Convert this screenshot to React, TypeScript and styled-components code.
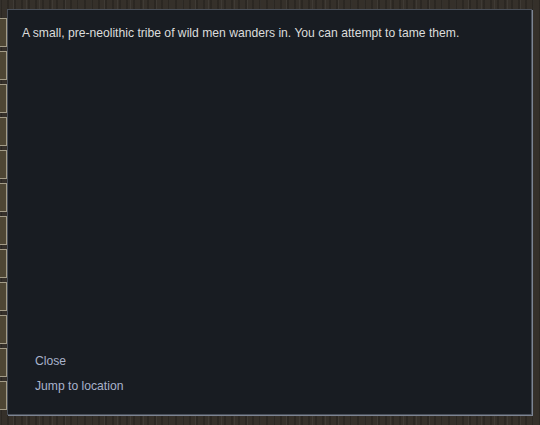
import styled, { createGlobalStyle } from "styled-components";

const GlobalStyle = createGlobalStyle`
  html, body {
    margin: 0;
    padding: 0;
    width: 540px;
    height: 425px;
    overflow: hidden;
  }
  body {
    font-family: "Liberation Sans", Arial, sans-serif;
    background-color: #35302a;
    background-image:
      repeating-linear-gradient(90deg, rgba(0,0,0,0.18) 0px, rgba(0,0,0,0.18) 2px, transparent 2px, transparent 7px),
      repeating-linear-gradient(90deg, rgba(255,255,255,0.05) 0px, rgba(255,255,255,0.05) 1px, transparent 1px, transparent 13px);
  }
`;

const Screen = styled.div`
  width: 540px;
  height: 425px;
  display: flex;
  position: relative;
`;

const TileStrip = styled.div`
  width: 7px;
  display: flex;
  flex-direction: column;
  gap: 4px;
  padding-top: 18px;
`;

const Tile = styled.div`
  height: 27px;
  border: 1px solid #a39c88;
  border-left: none;
  background: #4e4634;
`;

const Dialog = styled.div`
  position: absolute;
  left: 7px;
  top: 9px;
  width: 525px;
  height: 406px;
  background: #181c22;
  border: 1px solid #4a505a;
  box-shadow: 1px 1px 0 #7d8594;
  display: flex;
  flex-direction: column;
  justify-content: space-between;
  padding: 15px 14px 20px 14px;
  box-sizing: border-box;
`;

const Message = styled.p`
  margin: 0;
  font-size: 12.15px;
  line-height: 16px;
  color: #dcdcdc;
`;

const Actions = styled.ul`
  list-style: none;
  margin: 0;
  padding: 0 0 0 13px;
  display: flex;
  flex-direction: column;
  gap: 9px;
`;

const Action = styled.li`
  font-size: 12.15px;
  line-height: 16px;
  color: #a9b3cc;
  cursor: pointer;
`;

export default function App() {
  return (
    <>
      <GlobalStyle />
      <Screen>
        <TileStrip>
          {Array.from({ length: 12 }).map((_, i) => (
            <Tile key={i} />
          ))}
        </TileStrip>
        <Dialog>
          <Message>
            A small, pre-neolithic tribe of wild men wanders in. You can attempt to tame them.
          </Message>
          <Actions>
            <Action>Close</Action>
            <Action>Jump to location</Action>
          </Actions>
        </Dialog>
      </Screen>
    </>
  );
}
